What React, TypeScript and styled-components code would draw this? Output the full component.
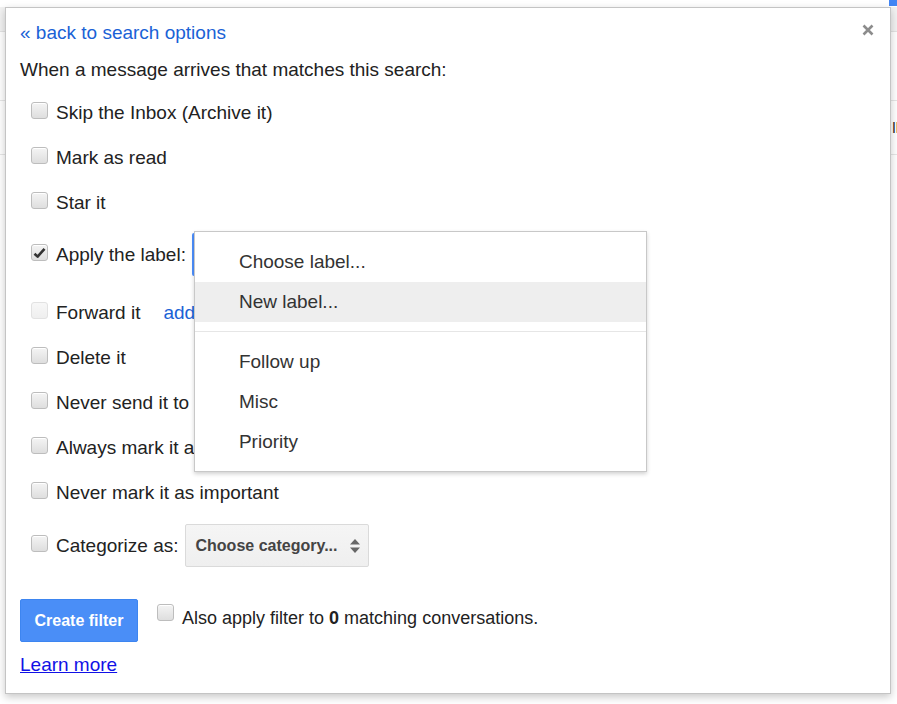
import React from "react";
import styled, { createGlobalStyle } from "styled-components";

const Global = createGlobalStyle`
  html, body { margin: 0; padding: 0; background: #fff; }
  body { font-family: "Liberation Sans", Arial, sans-serif; color: #222; }
  * { box-sizing: border-box; }
`;

const Page = styled.div`
  position: relative;
  width: 897px;
  height: 704px;
  overflow: hidden;
  background: #fff;
`;

/* ---------- background gmail page ---------- */
const Backdrop = styled.div`
  display: flex;
  flex-direction: column;
  width: 100%;
`;
const TopStrip = styled.div`
  height: 7px;
  display: flex;
  justify-content: flex-end;
`;
const BlueTab = styled.div`
  width: 8px;
  height: 6px;
  background: #4285f4;
`;
const Band = styled.div`
  height: 25px;
  background: #f2f2f2;
  border-bottom: 1px solid #e3e3e3;
`;
const BgRow = styled.div<{ $h: number }>`
  height: ${(p) => p.$h}px;
  border-bottom: 1px solid #e6e6e6;
  display: flex;
  align-items: center;
  justify-content: flex-end;
  font-size: 15px;
  color: #222;
`;
const BgText = styled.span`
  margin-right: -2px;
`;

/* ---------- dialog ---------- */
const Dialog = styled.div`
  position: absolute;
  left: 5px;
  top: 7px;
  width: 886px;
  height: 687px;
  background: #fff;
  border: 1px solid #c4c4c4;
  box-shadow: 0 3px 8px rgba(0, 0, 0, 0.22);
  padding: 14px 16px 0 14px;
  font-size: 19px;
  line-height: 22px;
`;

const Header = styled.div`
  display: flex;
  justify-content: space-between;
  align-items: flex-start;
  height: 22px;
`;

const BackLink = styled.a`
  color: #1a62d6;
  text-decoration: none;
  cursor: pointer;
`;

const CloseBtn = styled.button`
  margin-top: 2px;
  width: 12px;
  height: 12px;
  padding: 0;
  border: 0;
  background: none;
  display: flex;
  cursor: pointer;
`;

const Intro = styled.div`
  margin-top: 15px;
  height: 22px;
  color: #222;
`;

const Options = styled.div`
  margin-top: 9px;
  padding-left: 11px;
  display: flex;
  flex-direction: column;
`;

const Row = styled.div<{ $h?: number; $top?: number; $mt?: number }>`
  height: ${(p) => p.$h ?? 45}px;
  margin-top: ${(p) => p.$mt ?? 0}px;
  padding-top: ${(p) => p.$top ?? 0}px;
  display: flex;
  align-items: ${(p) => (p.$top !== undefined ? "flex-start" : "center")};
`;

const Inline = styled.div`
  height: 43px;
  display: flex;
  align-items: center;
`;

const Box = styled.span<{ $checked?: boolean; $disabled?: boolean }>`
  width: 17px;
  height: 17px;
  flex: none;
  margin-right: 8px;
  margin-bottom: 4px;
  border-radius: 3px;
  border: 1px solid ${(p) => (p.$disabled ? "#e2e2e2" : "#bdbdbd")};
  background: ${(p) =>
    p.$disabled
      ? "linear-gradient(#f7f7f7, #efefef)"
      : "linear-gradient(#f4f4f4, #dedede)"};
  box-shadow: ${(p) => (p.$disabled ? "none" : "inset 0 1px 0 #fff")};
  display: flex;
  align-items: center;
  justify-content: center;
`;

const Label = styled.span`
  color: #222;
  white-space: nowrap;
`;

const BlueLink = styled.a`
  color: #1a62d6;
  margin-left: 23px;
  white-space: nowrap;
  text-decoration: none;
`;

const SelectWrap = styled.div`
  position: relative;
  margin-left: 6px;
  height: 43px;
`;

const FocusedSelect = styled.div`
  width: 220px;
  height: 43px;
  border: 1px solid #4d90fe;
  border-left-width: 2px;
  border-radius: 2px;
  background: #fff;
`;

const Menu = styled.ul`
  position: absolute;
  left: 2px;
  top: -2px;
  z-index: 5;
  width: 453px;
  margin: 0;
  padding: 10px 0 9px;
  list-style: none;
  background: #fff;
  border: 1px solid #c8c8c8;
  box-shadow: 0 2px 4px rgba(0, 0, 0, 0.18);
`;

const MenuItem = styled.li<{ $active?: boolean }>`
  height: 40px;
  display: flex;
  align-items: center;
  padding-left: 44px;
  color: #333;
  background: ${(p) => (p.$active ? "#eeeeee" : "transparent")};
`;

const MenuSep = styled.li`
  height: 1px;
  margin: 9px 0 10px;
  background: #e6e6e6;
`;

const CategorySelect = styled.div`
  margin-left: 6px;
  width: 184px;
  height: 43px;
  border: 1px solid #dadada;
  border-radius: 2px;
  background: linear-gradient(#f5f5f5, #efefef);
  display: flex;
  align-items: center;
  justify-content: space-between;
  padding: 0 7px 0 10px;
  font-size: 16px;
  font-weight: bold;
  color: #444;
`;

const Footer = styled.div`
  margin-top: 32px;
  display: flex;
  align-items: flex-start;
`;

const CreateBtn = styled.button`
  width: 118px;
  height: 43px;
  border: 1px solid #3d85f0;
  border-radius: 2px;
  background: #4a8ef7;
  color: #fff;
  font-family: "Liberation Sans", Arial, sans-serif;
  font-size: 16px;
  font-weight: bold;
  padding: 0;
  cursor: pointer;
`;

const FooterCheck = styled.div`
  margin-left: 19px;
  margin-top: 5px;
  display: flex;
  align-items: flex-start;
`;

const FooterText = styled.span`
  margin-top: 3px;
  font-size: 18px;
  white-space: nowrap;
`;

const LearnMore = styled.a`
  display: inline-block;
  margin-top: 12px;
  color: #1111e6;
  text-decoration: underline;
`;

const Check = () => (
  <svg width="13" height="12" viewBox="0 0 13 12">
    <path d="M1.5 6.8 L4.6 9.6 L11.5 1.8" fill="none" stroke="#333" strokeWidth="2.6" strokeLinejoin="round" />
  </svg>
);

const Updown = () => (
  <svg width="12" height="18" viewBox="0 0 12 18">
    <path d="M1 7.5 L6 2 L11 7.5 Z" fill="#666" />
    <path d="M1 10.5 L6 16 L11 10.5 Z" fill="#666" />
  </svg>
);

const options = ["Skip the Inbox (Archive it)", "Mark as read", "Star it"];

const laterOptions = [
  "Delete it",
  "Never send it to Spam",
  "Always mark it as important",
  "Never mark it as important",
];

export default function App() {
  return (
    <>
      <Global />
      <Page>
        <Backdrop>
          <TopStrip>
            <BlueTab />
          </TopStrip>
          <Band />
          <BgRow $h={69} />
          <BgRow $h={54}>
            <BgText>ll</BgText>
          </BgRow>
        </Backdrop>

        <Dialog>
          <Header>
            <BackLink>« back to search options</BackLink>
            <CloseBtn aria-label="Close">
              <svg width="12" height="12" viewBox="0 0 12 12">
                <path d="M1.5 1.5 L10.5 10.5 M10.5 1.5 L1.5 10.5" stroke="#8c8c8c" strokeWidth="2.6" />
              </svg>
            </CloseBtn>
          </Header>
          <Intro>When a message arrives that matches this search:</Intro>

          <Options>
            {options.map((o) => (
              <Row key={o}>
                <Box />
                <Label>{o}</Label>
              </Row>
            ))}
            <Row $h={65} $top={8}>
              <Inline>
                <Box $checked>
                  <Check />
                </Box>
                <Label>Apply the label:</Label>
                <SelectWrap>
                  <FocusedSelect />
                  <Menu>
                    <MenuItem>Choose label...</MenuItem>
                    <MenuItem $active>New label...</MenuItem>
                    <MenuSep />
                    <MenuItem>Follow up</MenuItem>
                    <MenuItem>Misc</MenuItem>
                    <MenuItem>Priority</MenuItem>
                  </Menu>
                </SelectWrap>
              </Inline>
            </Row>
            <Row>
              <Box $disabled />
              <Label>Forward it</Label>
              <BlueLink>add forwarding address</BlueLink>
            </Row>
            {laterOptions.map((o) => (
              <Row key={o}>
                <Box />
                <Label>{o}</Label>
              </Row>
            ))}
            <Row $h={43} $mt={9}>
              <Box />
              <Label>Categorize as:</Label>
              <CategorySelect>
                <span>Choose category...</span>
                <Updown />
              </CategorySelect>
            </Row>
          </Options>

          <Footer>
            <CreateBtn>Create filter</CreateBtn>
            <FooterCheck>
              <Box />
              <FooterText>
                Also apply filter to <b>0</b> matching conversations.
              </FooterText>
            </FooterCheck>
          </Footer>
          <LearnMore>Learn more</LearnMore>
        </Dialog>
      </Page>
    </>
  );
}
